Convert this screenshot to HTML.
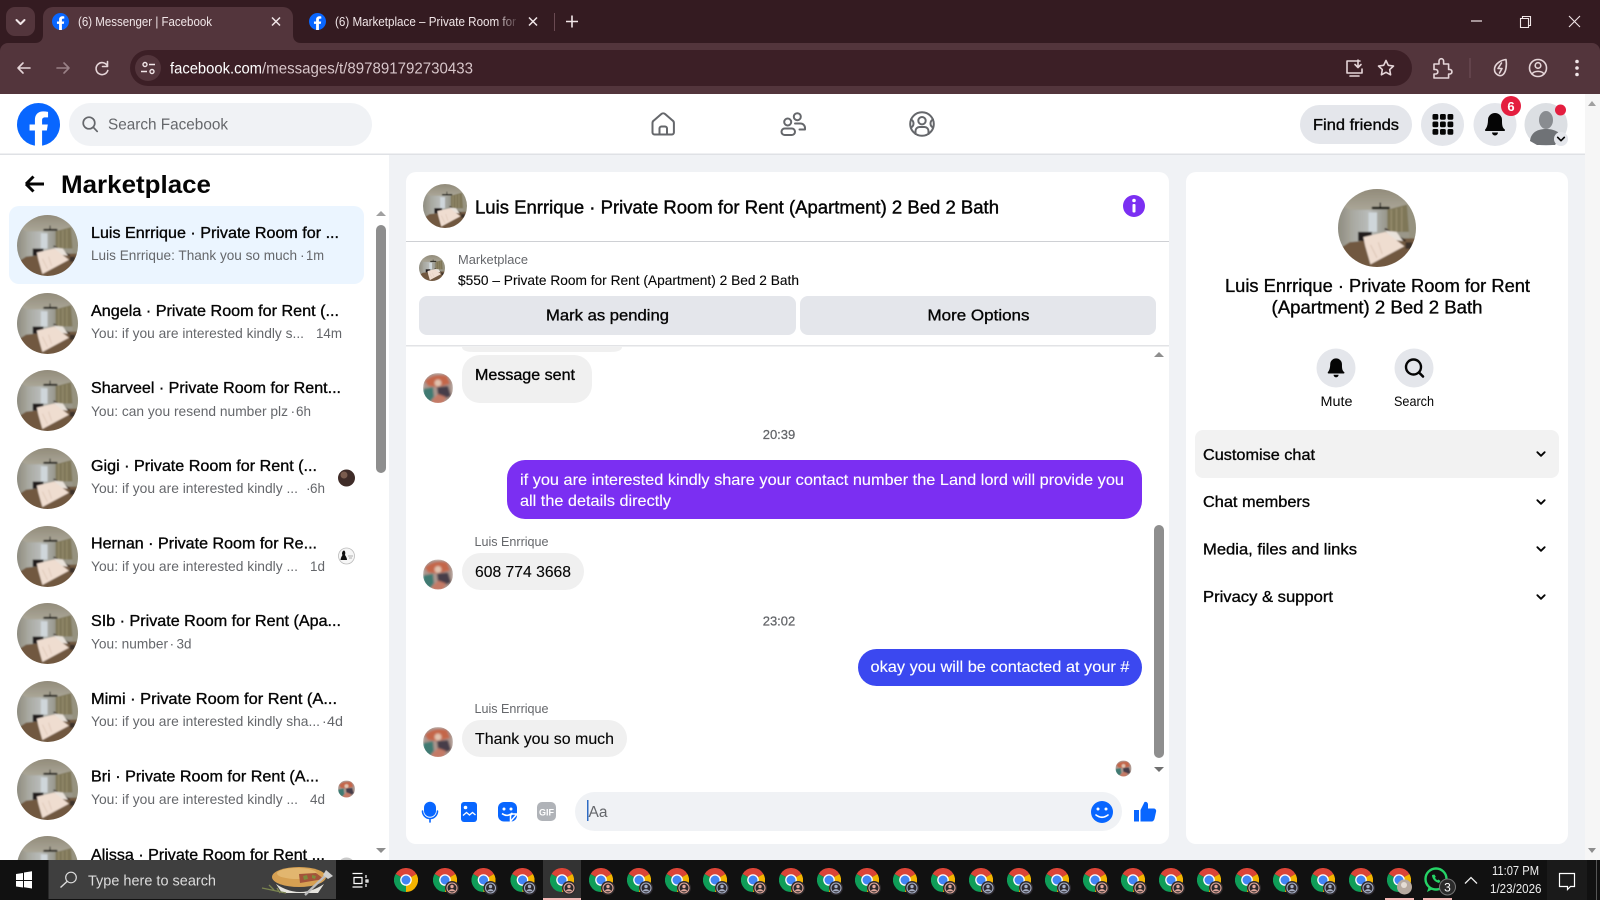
<!DOCTYPE html>
<html><head><meta charset="utf-8"><title>Messenger | Facebook</title>
<style>
html,body{margin:0;padding:0;width:1600px;height:900px;overflow:hidden;background:#f0f2f5}
svg{display:block;position:absolute;left:0;top:0}
text{font-family:"Liberation Sans",sans-serif;white-space:pre}
.n{font-size:16px;fill:#050505;stroke:#050505;stroke-width:.35}
.s{font-size:14px;fill:#65676b}
.m{font-size:16px;fill:#050505;stroke:#050505;stroke-width:.12}
.w{font-size:16px;fill:#fff;stroke:#fff;stroke-width:.12}
.t{font-size:13px;fill:#65676b}
.c{font-size:12.5px;fill:#65676b;stroke:#65676b;stroke-width:.15}
.tab{font-size:12.5px;fill:#f1e6e8}
.bar{fill:none;stroke:#e5d5d8;stroke-width:1.6;stroke-linecap:round;stroke-linejoin:round}
.nav{fill:none;stroke:#65676b;stroke-width:2;stroke-linecap:round;stroke-linejoin:round}
</style></head><body>
<svg width="1600" height="900" viewBox="0 0 1600 900" xmlns="http://www.w3.org/2000/svg">
<defs>
<clipPath id="rc"><circle cx="30" cy="30" r="30"/></clipPath>
<clipPath id="lc"><circle cx="15" cy="15" r="15"/></clipPath>
<clipPath id="listclip"><rect x="0" y="154" width="389" height="706"/></clipPath>
<filter id="b" x="-5%" y="-5%" width="110%" height="110%"><feGaussianBlur stdDeviation=".7"/></filter>
<filter id="b2" x="-5%" y="-5%" width="110%" height="110%"><feGaussianBlur stdDeviation="1"/></filter>
<linearGradient id="fade" x1="0" x2="1"><stop offset="0" stop-color="#341b21" stop-opacity="0"/><stop offset="1" stop-color="#341b21"/></linearGradient>
<linearGradient id="ceil" x1="0" x2="0" y1="0" y2="1"><stop offset="0" stop-color="#8f8877"/><stop offset="1" stop-color="#aaa697"/></linearGradient>
<linearGradient id="wall" x1="0" x2="1" y1="0" y2="0"><stop offset="0" stop-color="#8a887c"/><stop offset="1" stop-color="#a4a297"/></linearGradient>
<linearGradient id="back" x1="0" x2="1" y1="0" y2="0"><stop offset="0" stop-color="#a5a59c"/><stop offset=".5" stop-color="#b9bcba"/><stop offset="1" stop-color="#96958a"/></linearGradient>
<symbol id="room" viewBox="0 0 60 60"><g clip-path="url(#rc)"><g filter="url(#b)">
<rect x="-2" y="-2" width="64" height="64" fill="#9a9789"/>
<polygon points="-2,-2 62,-2 62,12 38,16 9,16 -2,10" fill="url(#ceil)"/>
<polygon points="-2,10 9,16 9,42 -2,48" fill="url(#wall)"/>
<rect x="9" y="16" width="29" height="25" fill="url(#back)"/>
<rect x="23.500" y="18" width="6.500" height="15" fill="#cfd6da"/>
<polygon points="38,16 53,12 56,33 38,33" fill="#7f7759"/>
<path d="M41 16v17M45 15v18M49 14v19" stroke="#958b6c" stroke-width="1.200"/>
<polygon points="53,12 62,10 62,42 55,40" fill="#96927f"/>
<polygon points="-2,48 9,41 38,38 62,38 62,62 -2,62" fill="#71583f"/>
<rect x="15.500" y="33" width="10.500" height="7" fill="#201d1c"/>
<path d="M36 30.500l16 9.500" stroke="#342a24" stroke-width="1.400"/>
<polygon points="36.500,32 45,33 50,40 41,39" fill="#e9e2da"/>
<polygon points="19.500,37 36.500,33 51,44 25,58 21,44" fill="#efddd0"/>
<path d="M25 43l5 10M31 41l3 9" stroke="#dcc6b6" stroke-width=".8" fill="none"/>
<rect x="52" y="41" width="5" height="5" fill="#3e3229"/>
<path d="M26.800 14.600h12.200" stroke="#15130f" stroke-width="1.900" stroke-linecap="round"/>
<path d="M32.500 10.500v4" stroke="#15130f" stroke-width="1"/>
</g></g></symbol>
<symbol id="luis" viewBox="0 0 30 30"><g clip-path="url(#lc)"><g filter="url(#b2)">
<rect width="30" height="30" fill="#ab968e"/>
<path d="M2 8Q10 0 24 3L27 11 14 14 5 13Z" fill="#c4664a"/>
<path d="M0 16l10-2 1 10-5 6H0Z" fill="#3f7a72"/>
<path d="M14 14l11-1 3 10-7 3-6-3Z" fill="#473e4a"/>
<path d="M9 27l6-6 8 3-3 7H9Z" fill="#c47a66"/>
<circle cx="15" cy="10" r="3.500" fill="#e1c2af"/>
</g></g></symbol>
<symbol id="fb" viewBox="0 0 36 36"><circle cx="18" cy="18" r="18" fill="#0866ff"/><path fill="#fff" d="M25 23l.8-5H21v-3.5c0-1.4.5-2.5 2.7-2.500H26V7.400c-1.300-.2-2.700-.4-4-.4-4.100 0-7 2.500-7 7v4h-4.500v5H15v13h6V23h4z"/></symbol>
<symbol id="chr" viewBox="0 0 24 24"><path fill="#db4437" d="M12 12L1.600 6A12 12 0 0 1 22.400 6Z"/><path fill="#f4b400" d="M12 12L22.400 6A12 12 0 0 1 12 24Z"/><path fill="#0f9d58" d="M12 12L12 24A12 12 0 0 1 1.600 6Z"/><circle cx="12" cy="12" r="5.800" fill="#fff"/><circle cx="12" cy="12" r="4.500" fill="#4285f4"/></symbol>
<symbol id="cp" viewBox="0 0 30 30"><use href="#chr" x="0" y="0" width="24" height="24"/><circle cx="19" cy="20" r="7" fill="#2d2a2c"/><circle cx="19" cy="20" r="5" fill="none" stroke="#e0a79c" stroke-width="1.100"/><circle cx="19" cy="18.500" r="1.700" fill="#e0a79c"/><path d="M15.700 23.300a3.600 3.600 0 0 1 6.600 0" fill="#e0a79c"/></symbol>
<symbol id="cg" viewBox="0 0 30 30"><use href="#chr" x="0" y="0" width="24" height="24"/><circle cx="19" cy="20" r="7" fill="#2d2a30"/><circle cx="19" cy="20" r="5" fill="none" stroke="#a5aec4" stroke-width="1.100"/><circle cx="19" cy="18.500" r="1.700" fill="#a5aec4"/><path d="M15.700 23.300a3.600 3.600 0 0 1 6.600 0" fill="#a5aec4"/></symbol>
<symbol id="chev" viewBox="0 0 12 12"><path d="M2 4l4 4 4-4" fill="none" stroke="#050505" stroke-width="2" stroke-linecap="round" stroke-linejoin="round"/></symbol>
</defs>

<!-- Browser chrome -->
<rect width="1600" height="94" fill="#341b21"/>
<path d="M0 94V51a8 8 0 0 1 8-8h1584a8 8 0 0 1 8 8v43z" fill="#53353c"/>
<path d="M35 43c5 0 8-3 8-8V17a10 10 0 0 1 10-10h230a10 10 0 0 1 10 10v18c0 5 3 8 8 8z" fill="#53353c"/>
<rect x="6" y="7" width="29" height="29" rx="9" fill="#53353c"/>
<path d="M16.500 20l4 4 4-4" fill="none" stroke="#f1e6e8" stroke-width="2" stroke-linecap="round" stroke-linejoin="round"/>
<use href="#fb" x="52" y="13" width="17" height="17"/>
<text x="78" y="26" class="tab" textLength="134" lengthAdjust="spacingAndGlyphs">(6) Messenger | Facebook</text>
<path d="M272 17.500l8 8M280 17.500l-8 8" stroke="#f1e6e8" stroke-width="1.500"/>
<use href="#fb" x="309" y="13" width="17" height="17"/>
<text x="335" y="26" class="tab" textLength="181" lengthAdjust="spacingAndGlyphs">(6) Marketplace – Private Room for</text>
<rect x="497" y="12" width="23" height="20" fill="url(#fade)"/>
<path d="M529 17.500l8 8M537 17.500l-8 8" stroke="#f1e6e8" stroke-width="1.500"/>
<rect x="554" y="13" width="1" height="18" fill="#6a4a52"/>
<path d="M572 15.500v12M566 21.500h12" stroke="#f1e6e8" stroke-width="1.600"/>
<path d="M1471 21h11" stroke="#f1e6e8" stroke-width="1.200"/>
<path d="M1520.500 18.500h8v9h-8zM1522.500 18.500v-2h8v9h-2" fill="none" stroke="#f1e6e8" stroke-width="1.100"/>
<path d="M1569 16l11 11M1580 16l-11 11" stroke="#f1e6e8" stroke-width="1.100"/>

<path d="M30 68H18M18 68l5-5M18 68l5 5" class="bar"/>
<path d="M57 68h12M69 68l-5-5M69 68l-5 5" fill="none" stroke="#9a8187" stroke-width="1.600" stroke-linecap="round" stroke-linejoin="round"/>
<path d="M107.500 66a6 6 0 1 0 .3 4.500M107.500 61.500v5h-5" class="bar"/>
<rect x="130" y="50" width="1282" height="36" rx="18" fill="#3c1f26"/>
<circle cx="148" cy="68" r="13" fill="#53353c"/>
<g fill="none" stroke="#f1e6e8" stroke-width="1.400"><circle cx="145" cy="64.500" r="2"/><circle cx="152" cy="71.500" r="2"/><path d="M149 64.500h6M141 71.500h6"/></g>
<text x="170" y="73.500" font-size="15.500" fill="#fff" textLength="92" lengthAdjust="spacingAndGlyphs">facebook.com</text>
<text x="262" y="73.500" font-size="15.500" fill="#d8c6ca" textLength="211" lengthAdjust="spacingAndGlyphs">/messages/t/897891792730433</text>
<path d="M1360 61h-13v12h15v-4M1350 76h9M1358 60v7M1355 64.500l3 3 3-3" class="bar"/><path d="M1386 60.500l2.300 4.800 5.200.7-3.800 3.600.9 5.200-4.600-2.500-4.600 2.500.9-5.200-3.800-3.600 5.200-.7z" class="bar"/>
<path d="M1434 64h5v-3a2.300 2.300 0 0 1 4.600 0v3h5v5.500h1.500a2.300 2.300 0 0 1 0 4.500h-1.500v4h-14.600v-4h2a2.300 2.300 0 0 0 0-4.500h-2z" class="bar"/>
<rect x="1469.500" y="58" width="1" height="20" fill="#70515a"/>
<path d="M1506 59.500c1 6 0 13-3.500 15.500-3 2-8-1-8-5.500 0-6 7-9.500 11.500-10zM1501.500 63l-3.500 5.500h4l-2.500 4.500" class="bar"/>
<circle cx="1538" cy="68" r="8.500" class="bar"/><circle cx="1538" cy="65.500" r="2.800" class="bar"/><path d="M1532 74c2-3.500 10-3.500 12 0" class="bar"/>
<g fill="#f1e6e8"><circle cx="1577" cy="61.500" r="1.800"/><circle cx="1577" cy="68" r="1.800"/><circle cx="1577" cy="74.500" r="1.800"/></g>

<!-- Page -->
<rect y="94" width="1600" height="766" fill="#f0f2f5"/>
<rect x="1585" y="94" width="15" height="766" fill="#f6f6f6"/>
<path d="M1588 106l4-5 4 5z" fill="#a0a0a0"/><path d="M1588 848l4 5 4-5z" fill="#8e8e8e"/>
<rect y="94" width="1585" height="60" fill="#fff"/>
<rect y="153.500" width="1585" height="1.500" fill="#dfe1e5"/>
<use href="#fb" x="17" y="103" width="43" height="43"/>
<rect x="69" y="103" width="303" height="43" rx="21.500" fill="#f0f2f5"/>
<circle cx="89" cy="123" r="5.800" fill="none" stroke="#65676b" stroke-width="1.700"/><path d="M93.200 127.200l4 4.200" stroke="#65676b" stroke-width="1.700" stroke-linecap="round"/>
<text x="108" y="129.500" font-size="16" fill="#65676b" textLength="120" lengthAdjust="spacingAndGlyphs">Search Facebook</text>
<path d="M652.500 123a3 3 0 0 1 1.200-2.400l7.500-6.500a3 3 0 0 1 4 0l7.500 6.500a3 3 0 0 1 1.200 2.400v9.500a2 2 0 0 1-2 2h-17.400a2 2 0 0 1-2-2zM659.500 134.500v-6a2 2 0 0 1 2-2h3.500a2 2 0 0 1 2 2v6" class="nav"/>
<circle cx="787.700" cy="122" r="3.500" class="nav"/>
<rect x="781.500" y="128.500" width="13.500" height="6.500" rx="3.200" class="nav"/>
<circle cx="797.300" cy="116.700" r="3.500" class="nav"/>
<path d="M795 123.500h5.500a4.500 4.500 0 0 1 4.500 4.500v1.500h-5.500" class="nav"/>
<circle cx="922" cy="124" r="11.800" class="nav"/><circle cx="922" cy="120.700" r="3.700" class="nav"/>
<path d="M915.500 134v-3a4 4 0 0 1 4-4h5a4 4 0 0 1 4 4v3" class="nav"/>
<path d="M911 119.500a4.500 4.500 0 0 1 2.500 4 4.500 4.500 0 0 1-2.500 4M933 119.500a4.500 4.500 0 0 0-2.500 4 4.500 4.500 0 0 0 2.500 4" class="nav"/>
<rect x="1300" y="105" width="112" height="39" rx="19.500" fill="#e4e6eb"/>
<text x="1313" y="130" class="n" textLength="86" lengthAdjust="spacingAndGlyphs">Find friends</text>
<circle cx="1442.500" cy="124.500" r="21.500" fill="#e4e6eb"/>
<g fill="#050505"><rect x="1432.500" y="114" width="5.800" height="5.800" rx="1.500"/><rect x="1440" y="114" width="5.800" height="5.800" rx="1.500"/><rect x="1447.500" y="114" width="5.800" height="5.800" rx="1.500"/><rect x="1432.500" y="121.500" width="5.800" height="5.800" rx="1.500"/><rect x="1440" y="121.500" width="5.800" height="5.800" rx="1.500"/><rect x="1447.500" y="121.500" width="5.800" height="5.800" rx="1.500"/><rect x="1432.500" y="129" width="5.800" height="5.800" rx="1.500"/><rect x="1440" y="129" width="5.800" height="5.800" rx="1.500"/><rect x="1447.500" y="129" width="5.800" height="5.800" rx="1.500"/></g>
<circle cx="1495" cy="124.500" r="21.500" fill="#e4e6eb"/>
<path transform="translate(1483 112.500)" fill="#050505" d="M12 0.500a7 7 0 0 0-7 7c0 4-1 7.500-2.800 9.500-.5.700 0 1.500.9 1.500h17.800c.9 0 1.400-.8.900-1.500C19 15 19 11.500 19 7.500a7 7 0 0 0-7-7zM9 20a3 3 0 0 0 6 0z"/>
<circle cx="1511" cy="106" r="10" fill="#e41e3f"/><text x="1511" y="111" font-size="13" font-weight="bold" fill="#fff" text-anchor="middle">6</text>
<circle cx="1546" cy="124.500" r="21.500" fill="#dcdfe3"/>
<ellipse cx="1546" cy="120" rx="7" ry="9" fill="#898c90"/>
<path d="M1530 141c1-9 8-12 16-12s14 3 15 8l-6 8h-18z" fill="#6f7276"/>
<circle cx="1560.500" cy="110" r="5.500" fill="#e41e3f"/>
<circle cx="1561" cy="139" r="7" fill="#e4e6eb"/><use href="#chev" x="1556" y="134" width="10" height="10"/>

<!-- Left panel -->
<rect y="155" width="389" height="705" fill="#fff"/>
<path d="M44 184H26M26 184l7.500-7.500M26 184l7.500 7.500" fill="none" stroke="#050505" stroke-width="3" stroke-linejoin="round"/>
<text x="61" y="192.800" font-size="25" font-weight="bold" fill="#050505" textLength="150" lengthAdjust="spacingAndGlyphs">Marketplace</text>
<rect x="9" y="206" width="355" height="78" rx="10" fill="#ebf5ff"/>
<g clip-path="url(#listclip)">
<use href="#room" x="17" y="215" width="61" height="61"/>
<use href="#room" x="17" y="293" width="61" height="61"/>
<use href="#room" x="17" y="370" width="61" height="61"/>
<use href="#room" x="17" y="448" width="61" height="61"/>
<use href="#room" x="17" y="526" width="61" height="61"/>
<use href="#room" x="17" y="603" width="61" height="61"/>
<use href="#room" x="17" y="681" width="61" height="61"/>
<use href="#room" x="17" y="759" width="61" height="61"/>
<use href="#room" x="17" y="836" width="61" height="61"/>
<text x="91" y="238" class="n" textLength="248" lengthAdjust="spacingAndGlyphs">Luis Enrrique · Private Room for ...</text>
<text x="91" y="260" class="s" textLength="206" lengthAdjust="spacingAndGlyphs">Luis Enrrique: Thank you so much</text><text x="300" y="260" class="s">·</text><text x="306" y="260" class="s" textLength="18" lengthAdjust="spacingAndGlyphs">1m</text>
<text x="91" y="316" class="n" textLength="248" lengthAdjust="spacingAndGlyphs">Angela · Private Room for Rent (...</text>
<text x="91" y="338" class="s" textLength="213" lengthAdjust="spacingAndGlyphs">You: if you are interested kindly s...</text><text x="316" y="338" class="s" textLength="26" lengthAdjust="spacingAndGlyphs">14m</text>
<text x="91" y="393" class="n" textLength="250" lengthAdjust="spacingAndGlyphs">Sharveel · Private Room for Rent...</text>
<text x="91" y="416" class="s" textLength="197" lengthAdjust="spacingAndGlyphs">You: can you resend number plz</text><text x="290.500" y="416" class="s">·</text><text x="296" y="416" class="s" textLength="15" lengthAdjust="spacingAndGlyphs">6h</text>
<text x="91" y="471" class="n" textLength="226" lengthAdjust="spacingAndGlyphs">Gigi · Private Room for Rent (...</text>
<text x="91" y="493" class="s" textLength="207" lengthAdjust="spacingAndGlyphs">You: if you are interested kindly ...</text><text x="306" y="493" class="s">·</text><text x="310" y="493" class="s" textLength="15" lengthAdjust="spacingAndGlyphs">6h</text>
<text x="91" y="548.500" class="n" textLength="226" lengthAdjust="spacingAndGlyphs">Hernan · Private Room for Re...</text>
<text x="91" y="571" class="s" textLength="207" lengthAdjust="spacingAndGlyphs">You: if you are interested kindly ...</text><text x="310" y="571" class="s" textLength="15" lengthAdjust="spacingAndGlyphs">1d</text>
<text x="91" y="626" class="n" textLength="250" lengthAdjust="spacingAndGlyphs">SIb · Private Room for Rent (Apa...</text>
<text x="91" y="648.500" class="s" textLength="77" lengthAdjust="spacingAndGlyphs">You: number</text><text x="169.500" y="648.500" class="s">·</text><text x="176.500" y="648.500" class="s" textLength="15" lengthAdjust="spacingAndGlyphs">3d</text>
<text x="91" y="704" class="n" textLength="246" lengthAdjust="spacingAndGlyphs">Mimi · Private Room for Rent (A...</text>
<text x="91" y="726" class="s" textLength="229" lengthAdjust="spacingAndGlyphs">You: if you are interested kindly sha...</text><text x="322" y="726" class="s">·</text><text x="327" y="726" class="s" textLength="16" lengthAdjust="spacingAndGlyphs">4d</text>
<text x="91" y="781.500" class="n" textLength="228" lengthAdjust="spacingAndGlyphs">Bri · Private Room for Rent (A...</text>
<text x="91" y="804" class="s" textLength="207" lengthAdjust="spacingAndGlyphs">You: if you are interested kindly ...</text><text x="310" y="804" class="s" textLength="15" lengthAdjust="spacingAndGlyphs">4d</text>
<text x="91" y="860" class="n" textLength="234" lengthAdjust="spacingAndGlyphs">Alissa · Private Room for Rent ...</text>
<circle cx="346.500" cy="478" r="8.500" fill="#3f2c28"/><circle cx="344" cy="475" r="3.500" fill="#7a5c4e"/>
<circle cx="346.500" cy="556" r="8" fill="#f6f6f6" stroke="#bbb" stroke-width=".8"/><path d="M340.500 560c.5-3 1.500-4 2-5-1-1-.5-4 1.500-4.500 1.500.5 1.500 3 1 4.500 1 1.500 2 3 2 5z" fill="#111"/><path d="M348 556h5M349 558h3" stroke="#999" stroke-width=".8"/>
<use href="#luis" x="338" y="780.500" width="17" height="17"/>
<circle cx="346.500" cy="866" r="8.500" fill="#c9c9c9"/>
</g>
<path d="M376 216l5-5 5 5z" fill="#a0a0a0"/><path d="M376 848l5 5 5-5z" fill="#8e8e8e"/>
<rect x="376" y="225" width="10" height="248" rx="5" fill="#8e8e8e"/>

<!-- Centre panel -->
<rect x="406" y="172" width="763" height="672" rx="10" fill="#fff"/>
<use href="#room" x="423" y="184" width="44" height="44"/>
<text x="475" y="213.500" font-size="18" fill="#050505" stroke="#050505" stroke-width=".4" textLength="524" lengthAdjust="spacingAndGlyphs">Luis Enrrique · Private Room for Rent (Apartment) 2 Bed 2 Bath</text>
<circle cx="1134" cy="206" r="11" fill="#7b2ff2"/><circle cx="1134" cy="200.500" r="1.800" fill="#fff"/><rect x="1132.500" y="204" width="3" height="8.500" rx="1" fill="#fff"/>
<rect x="406" y="241" width="763" height="1" fill="#ced0d4"/>
<use href="#room" x="419" y="255" width="26" height="26"/>
<text x="458" y="264" font-size="12.500" fill="#65676b" textLength="70" lengthAdjust="spacingAndGlyphs">Marketplace</text>
<text x="458" y="285" font-size="14" fill="#050505" stroke="#050505" stroke-width=".1" textLength="341" lengthAdjust="spacingAndGlyphs">$550 – Private Room for Rent (Apartment) 2 Bed 2 Bath</text>
<rect x="419" y="296" width="377" height="39" rx="8" fill="#e4e6eb"/>
<rect x="800" y="296" width="356" height="39" rx="8" fill="#e4e6eb"/>
<text x="546" y="320.500" class="n" textLength="123" lengthAdjust="spacingAndGlyphs">Mark as pending</text>
<text x="927.500" y="320.500" class="n" textLength="102" lengthAdjust="spacingAndGlyphs">More Options</text>
<rect x="406" y="345" width="763" height="1.500" fill="#e2e3e6"/>
<path d="M462 347h160q0 5-12 5H474q-12 0-12-5z" fill="#f0f0f0"/>
<rect x="462" y="355" width="130" height="48" rx="18" fill="#f0f0f0"/>
<text x="475" y="380" class="n" textLength="100" lengthAdjust="spacingAndGlyphs">Message sent</text>
<use href="#luis" x="423" y="373" width="30" height="30"/>
<text x="779" y="439" class="t" text-anchor="middle" stroke="#65676b" stroke-width=".25">20:39</text>
<rect x="507" y="460" width="635" height="59" rx="18" fill="#7b2ff2"/>
<text x="520" y="485" class="w" textLength="604" lengthAdjust="spacingAndGlyphs">if you are interested kindly share your contact number the Land lord will provide you</text>
<text x="520" y="506" class="w" textLength="151" lengthAdjust="spacingAndGlyphs">all the details directly</text>
<text x="474.500" y="546" font-size="12.500" fill="#65676b" textLength="74" lengthAdjust="spacingAndGlyphs">Luis Enrrique</text>
<rect x="462" y="553" width="122" height="37" rx="18.500" fill="#f0f0f0"/>
<text x="475" y="577" class="m" textLength="96" lengthAdjust="spacingAndGlyphs">608 774 3668</text>
<use href="#luis" x="423" y="559.500" width="30" height="30"/>
<text x="779" y="625.500" class="t" text-anchor="middle" stroke="#65676b" stroke-width=".25">23:02</text>
<rect x="858" y="649" width="284" height="37" rx="18.500" fill="#3b48f0"/>
<text x="870.500" y="672" class="w" textLength="259" lengthAdjust="spacingAndGlyphs">okay you will be contacted at your #</text>
<text x="474.500" y="713" font-size="12.500" fill="#65676b" textLength="74" lengthAdjust="spacingAndGlyphs">Luis Enrrique</text>
<rect x="462" y="720" width="165" height="37" rx="18.500" fill="#f0f0f0"/>
<text x="475" y="744" class="m" textLength="139" lengthAdjust="spacingAndGlyphs">Thank you so much</text>
<use href="#luis" x="423" y="727" width="30" height="30"/>
<use href="#luis" x="1115.500" y="760.500" width="16" height="16"/>
<path d="M1154 357l5-5 5 5z" fill="#8e8e8e"/><path d="M1154 767l5 5 5-5z" fill="#707070"/>
<rect x="1154" y="525" width="10" height="233" rx="5" fill="#8e8e8e"/>
<!-- composer -->
<rect x="424" y="801.700" width="12" height="15" rx="6" fill="#0866ff"/>
<path d="M422.500 811a7.500 7.500 0 0 0 15 0M430 818.500v3.500" fill="none" stroke="#0866ff" stroke-width="1.600" stroke-linecap="round"/>
<rect x="461" y="802" width="16" height="20" rx="3" fill="#0866ff"/><circle cx="465.500" cy="807.500" r="1.800" fill="#fff"/><path d="M463 815.500l3.500-3 3 2.500 3-2.500 3 2.500" fill="none" stroke="#fff" stroke-width="1.300"/>
<rect x="498" y="802" width="19" height="19.500" rx="6" fill="#0866ff"/><circle cx="504" cy="809" r="1.500" fill="#fff"/><circle cx="511" cy="809" r="1.500" fill="#fff"/><path d="M502 813.500q5 4 10.500-.5M517 814l-6.500 7.500v-5a2.500 2.500 0 0 1 2.500-2.500z" fill="none" stroke="#fff" stroke-width="1.500"/>
<rect x="537" y="802" width="19" height="19" rx="5" fill="#b0b3b8"/><text x="546.500" y="815.300" font-size="9" font-weight="bold" fill="#fff" text-anchor="middle">GIF</text>
<rect x="575" y="792" width="547" height="39" rx="19.500" fill="#f0f2f5"/>
<rect x="587" y="800" width="1.500" height="21" fill="#2f6cc4"/>
<text x="588.500" y="817" font-size="15.500" fill="#65676b">Aa</text>
<circle cx="1102" cy="812" r="11" fill="#0866ff"/><circle cx="1098" cy="809" r="1.500" fill="#fff"/><circle cx="1106" cy="809" r="1.500" fill="#fff"/><path d="M1096 815q6 4.500 12 0" fill="none" stroke="#fff" stroke-width="1.600" stroke-linecap="round"/>
<path fill="#0866ff" d="M1134 810h5v11.500h-5zM1140.500 810l4-8c1.800-.6 3.500.5 3.500 2.500v4h5.500c1.800 0 3 1.400 2.600 3l-1.600 7.200c-.4 1.700-1.500 2.800-3 2.800h-11z"/>

<!-- Right panel -->
<rect x="1186" y="172" width="382" height="672" rx="10" fill="#fff"/>
<use href="#room" x="1338" y="189" width="78" height="78"/>
<text x="1225" y="292" font-size="18" fill="#050505" stroke="#050505" stroke-width=".35" textLength="305" lengthAdjust="spacingAndGlyphs">Luis Enrrique · Private Room for Rent</text>
<text x="1271.500" y="313.700" font-size="18" fill="#050505" stroke="#050505" stroke-width=".35" textLength="211" lengthAdjust="spacingAndGlyphs">(Apartment) 2 Bed 2 Bath</text>
<circle cx="1336" cy="368" r="19.500" fill="#e4e6eb"/>
<path transform="translate(1326 358) scale(.84)" fill="#050505" d="M12 0.500a7 7 0 0 0-7 7c0 4-1 7.500-2.800 9.500-.5.700 0 1.500.9 1.500h17.800c.9 0 1.400-.8.900-1.500C19 15 19 11.500 19 7.500a7 7 0 0 0-7-7zM9 20a3 3 0 0 0 6 0z"/>
<circle cx="1414" cy="368" r="19.500" fill="#e4e6eb"/>
<circle cx="1413.500" cy="367" r="7.500" fill="none" stroke="#050505" stroke-width="2.400"/><path d="M1419 372.500l4 4" stroke="#050505" stroke-width="2.600" stroke-linecap="round"/>
<text x="1320.500" y="406" font-size="14" fill="#050505" textLength="32" lengthAdjust="spacingAndGlyphs">Mute</text>
<text x="1394" y="406" font-size="14" fill="#050505" textLength="40" lengthAdjust="spacingAndGlyphs">Search</text>
<rect x="1195" y="430" width="364" height="48" rx="8" fill="#f2f2f2"/>
<text x="1203" y="460" class="n" textLength="112" lengthAdjust="spacingAndGlyphs">Customise chat</text>
<text x="1203" y="507" class="n" textLength="107" lengthAdjust="spacingAndGlyphs">Chat members</text>
<text x="1203" y="554.500" class="n" textLength="154" lengthAdjust="spacingAndGlyphs">Media, files and links</text>
<text x="1203" y="602" class="n" textLength="130" lengthAdjust="spacingAndGlyphs">Privacy &amp; support</text>
<use href="#chev" x="1535.500" y="448.500" width="11" height="11"/>
<use href="#chev" x="1535.500" y="496.500" width="11" height="11"/>
<use href="#chev" x="1535.500" y="543.500" width="11" height="11"/>
<use href="#chev" x="1535.500" y="591.500" width="11" height="11"/>

<!-- Taskbar -->
<rect y="860" width="1600" height="40" fill="#111"/>
<g fill="#fff"><path d="M16 874l7-1v7h-7zM24 872.500l8-1.200V880h-8zM16 881h7v6.500l-7-1zM24 881h8v7.500l-8-1.200z"/></g>
<rect x="48.500" y="860" width="287.500" height="39" fill="#3f3f3f"/>
<circle cx="71" cy="877.500" r="5.300" fill="none" stroke="#ddd" stroke-width="1.200"/><path d="M67 881.500l-6.500 6" stroke="#ddd" stroke-width="1.400"/>
<text x="88" y="885.500" font-size="14.500" fill="#ddd" textLength="128" lengthAdjust="spacingAndGlyphs">Type here to search</text>
<path d="M276 884q24 16 48 0l-6 9h-36z" fill="#e6e4de"/>
<ellipse cx="299" cy="877" rx="27" ry="10" fill="#d6a052"/>
<ellipse cx="297" cy="873.500" rx="20" ry="5.500" fill="#e2b66f"/>
<path d="M299 874l17-1 8 6-24 4z" fill="#a3543a"/><path d="M303 876l4-1 1 4-4 1zM312 875l4 1-1 3-3-1z" fill="#7d8c3c"/>
<path d="M262 888l24 5M269 885l5 5M277 888l3 5" stroke="#7a8450" stroke-width="1.300" fill="none"/>
<path d="M305 895l22-21" stroke="#bdbdbd" stroke-width="2.300"/><path d="M326 870l7 6-5 3-5-4z" fill="#cfcfcf"/>
<path d="M352.500 873.500h10M352.500 887h10M354 877.500h8v6h-8zM366 875v3M366 880h2v2h-2zM366 884v3" fill="none" stroke="#fff" stroke-width="1.200"/>
<rect x="543" y="860" width="38" height="40" fill="#333"/>
<rect x="543" y="898" width="38" height="2" fill="#f2b8b5"/>
<rect x="1385" y="898" width="29" height="2" fill="#f2b8b5"/><rect x="1423" y="898" width="29" height="2" fill="#f2b8b5"/>
<use href="#chr" x="394" y="868" width="24" height="24"/>
<use href="#cp" x="433" y="868" width="30" height="30"/>
<use href="#cg" x="471.500" y="868" width="30" height="30"/>
<use href="#cg" x="510.500" y="868" width="30" height="30"/>
<use href="#cp" x="550" y="868" width="30" height="30"/>
<use href="#cp" x="589" y="868" width="30" height="30"/>
<use href="#cg" x="627" y="868" width="30" height="30"/>
<use href="#cp" x="665" y="868" width="30" height="30"/>
<use href="#cg" x="703" y="868" width="30" height="30"/>
<use href="#cp" x="741" y="868" width="30" height="30"/>
<use href="#cp" x="779" y="868" width="30" height="30"/>
<use href="#cg" x="817" y="868" width="30" height="30"/>
<use href="#cp" x="855" y="868" width="30" height="30"/>
<use href="#cg" x="893" y="868" width="30" height="30"/>
<use href="#cp" x="931" y="868" width="30" height="30"/>
<use href="#cg" x="969" y="868" width="30" height="30"/>
<use href="#cg" x="1007" y="868" width="30" height="30"/>
<use href="#cg" x="1045" y="868" width="30" height="30"/>
<use href="#cp" x="1083" y="868" width="30" height="30"/>
<use href="#cp" x="1121" y="868" width="30" height="30"/>
<use href="#cp" x="1159" y="868" width="30" height="30"/>
<use href="#cp" x="1197" y="868" width="30" height="30"/>
<use href="#cp" x="1235" y="868" width="30" height="30"/>
<use href="#cg" x="1273" y="868" width="30" height="30"/>
<use href="#cg" x="1311" y="868" width="30" height="30"/>
<use href="#cg" x="1349" y="868" width="30" height="30"/>
<use href="#chr" x="1387" y="868" width="24" height="24"/>
<circle cx="1404.500" cy="887" r="7.500" fill="#b7aaa0"/><circle cx="1404" cy="885" r="3" fill="#e4dcd4"/>
<circle cx="1436" cy="879" r="10.500" fill="none" stroke="#25d366" stroke-width="2.400"/>
<path d="M1427 892l2-6 4 3z" fill="#25d366"/>
<path d="M1432 875c0 4 3 7 7 8l1.500-2-2-1.500-1 .8c-1-.6-2-1.600-2.500-2.600l.8-1-1.400-2.200z" fill="#25d366"/>
<circle cx="1447.500" cy="887" r="8" fill="#2a2a2a" stroke="#777" stroke-width="1"/>
<text x="1447.500" y="891.500" font-size="12" fill="#fff" text-anchor="middle">3</text>
<path d="M1465 883.500l6-6 6 6" fill="none" stroke="#eee" stroke-width="1.300"/>
<text x="1492" y="875" font-size="12.500" fill="#eee" textLength="47" lengthAdjust="spacingAndGlyphs">11:07 PM</text>
<text x="1490" y="893" font-size="12.500" fill="#eee" textLength="51.500" lengthAdjust="spacingAndGlyphs">1/23/2026</text>
<rect x="1547" y="860" width="40" height="40" fill="#1a1a1a"/>
<path d="M1559.500 873.500h15v13h-4l-3 3v-3h-8z" fill="none" stroke="#fff" stroke-width="1.200"/>
<rect x="1596" y="860" width="1" height="40" fill="#555"/>
</svg>
</body></html>
